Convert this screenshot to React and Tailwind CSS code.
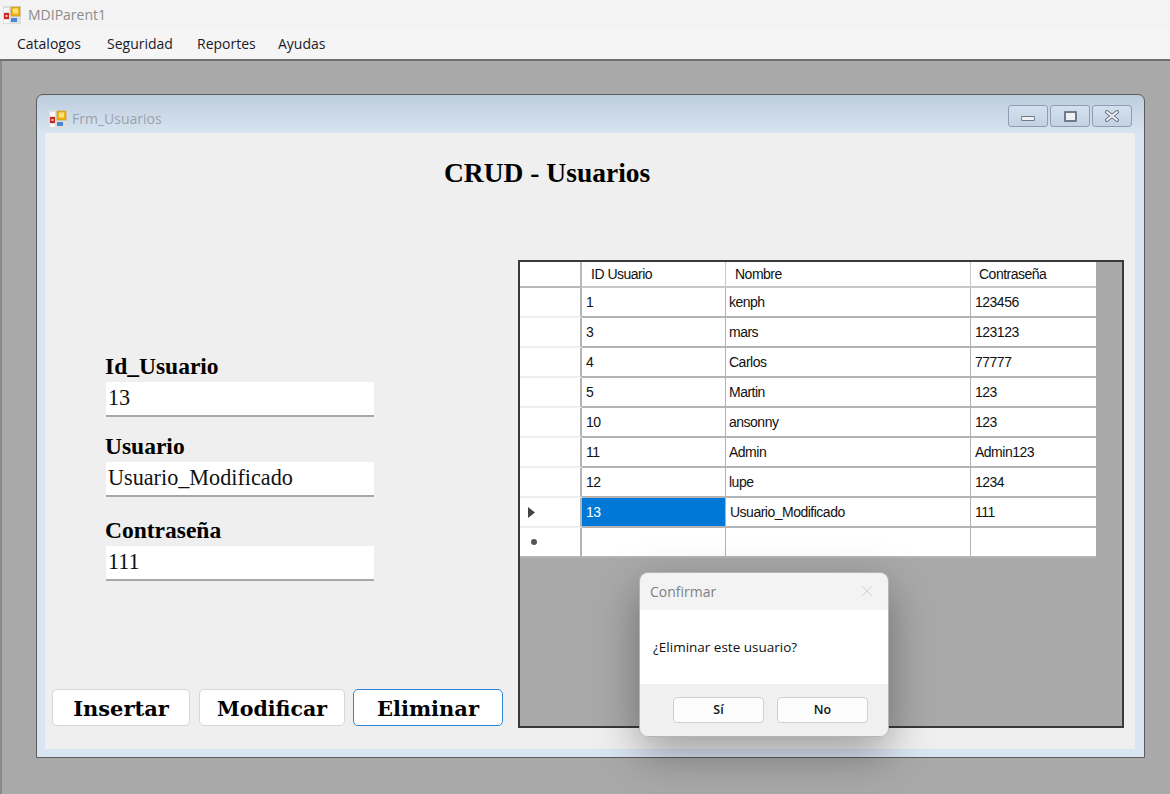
import { X } from 'lucide-react'

const rows = [
  ['1', 'kenph', '123456'],
  ['3', 'mars', '123123'],
  ['4', 'Carlos', '77777'],
  ['5', 'Martin', '123'],
  ['10', 'ansonny', '123'],
  ['11', 'Admin', 'Admin123'],
  ['12', 'lupe', '1234'],
  ['13', 'Usuario_Modificado', '111'],
]

function AppIcon() {
  return (
    <svg width="18" height="18" viewBox="0 0 18 18" className="shrink-0">
      <rect x="0" y="0" width="18" height="18" fill="#dedede" />
      <rect x="1" y="2" width="5" height="4" fill="#f8f8f8" />
      <rect x="1" y="7" width="5" height="6" fill="#c8261f" />
      <rect x="2.5" y="9" width="2" height="2" fill="#f6c9c0" />
      <rect x="1" y="14" width="5" height="3" fill="#f8f8f8" />
      <rect x="8" y="1" width="9" height="9" fill="#f2b415" stroke="#b98a1b" strokeWidth="0.6" />
      <rect x="10" y="2.5" width="5" height="5" fill="#fde37a" />
      <rect x="8" y="12" width="6" height="4" fill="#4a86d8" />
    </svg>
  )
}

function WinButton({ children }) {
  return (
    <div className="w-[40px] h-[22px] rounded-[3px] border border-[#8e9db5] bg-gradient-to-b from-[#d3e0ee] to-[#c3d2e3] flex items-center justify-center">
      {children}
    </div>
  )
}

function Field({ label, value, labelClass }) {
  return (
    <div className={labelClass}>
      <div className="ml-[60px] text-[23.5px] leading-[26px] font-bold text-black">{label}</div>
      <div className="ml-[61px] mt-[3px] w-[268px] h-[35px] bg-white border-b-2 border-[#a8a8a8] pl-[2px] text-[22.2px] leading-[32px] text-[#111]">
        {value}
      </div>
    </div>
  )
}

function FormButton({ children, className, active }) {
  return (
    <button
      className={`h-[37px] pt-[3px] rounded-[5px] bg-white font-bold text-black border ${active ? 'border-[#2f86d8]' : 'border-[#d6d6d6]'} ${className}`}
    >
      {children}
    </button>
  )
}

function Cell({ children, className = 'bg-white text-[#111]' }) {
  return (
    <div className={`h-[30px] border-r border-b-2 border-[#b4b4b4] flex items-center text-[14px] tracking-[-0.5px] ${className}`}>
      {children}
    </div>
  )
}

function Grid() {
  return (
    <div className="w-[606px] h-[468px] border-2 border-[#3a3a3a] bg-[#a9a9a9]">
      <div className="grid grid-cols-[62px_144px_245px_125px] w-[576px]" style={{ fontFamily: '"Liberation Sans", sans-serif' }}>
        <div className="h-[26px] bg-white border-r-2 border-b-2 border-[#b8b8b8]" />
        <div className="h-[26px] pt-[1px] bg-white border-r border-b-2 border-[#c8c8c8] pl-[9px] flex items-center text-[14px] tracking-[-0.5px] text-[#111]">ID Usuario</div>
        <div className="h-[26px] pt-[1px] bg-white border-r border-b-2 border-[#c8c8c8] pl-[9px] flex items-center text-[14px] tracking-[-0.5px] text-[#111]">Nombre</div>
        <div className="h-[26px] pt-[1px] bg-white border-b-2 border-[#c8c8c8] pl-[8px] flex items-center text-[14px] tracking-[-0.5px] text-[#111]">Contraseña</div>
        {rows.map((r) => {
          const selected = r[0] === '13'
          return (
            <div key={r[0]} className="contents">
              <div className="h-[30px] bg-white border-r-2 border-b-2 border-r-[#b4b4b4] border-b-[#efefef] flex items-center pl-[8px]">
                {selected && (
                  <svg width="7" height="11" viewBox="0 0 7 11">
                    <path d="M0 0 L7 5.5 L0 11 Z" fill="#444" />
                  </svg>
                )}
              </div>
              <Cell className={selected ? 'pl-[4px] bg-[#0078d7] text-white' : 'pl-[4px] bg-white text-[#111]'}>{r[0]}</Cell>
              <Cell className={selected ? 'pl-[4px] bg-white text-[#111]' : 'pl-[3px] bg-white text-[#111]'}>{r[1]}</Cell>
              <Cell className="pl-[4px] border-r-0 bg-white text-[#111]">{r[2]}</Cell>
            </div>
          )
        })}
        <div className="h-[30px] bg-white border-r-2 border-b-2 border-r-[#b4b4b4] border-b-[#b4b4b4] flex items-center pl-[11px]">
          <span className="w-[6px] h-[6px] rounded-full bg-[#555]" />
        </div>
        <Cell />
        <Cell />
        <Cell className="border-r-0 bg-white" />
      </div>
    </div>
  )
}

export default function App() {
  return (
    <div className="relative w-[1170px] h-[794px] overflow-hidden flex flex-col bg-[#a9a9a9]">
      {/* parent title bar */}
      <div className="h-[29px] bg-[#f3f3f3] flex items-center pl-[3px] gap-[7px] shrink-0">
        <AppIcon />
        <span className="text-[14px] text-[#8c8c8c]" style={{ fontFamily: '"Open Sans", sans-serif' }}>MDIParent1</span>
      </div>
      {/* menu */}
      <div className="h-[32px] pb-[2px] bg-[#f5f5f5] border-b-2 border-[#6f6f6f] flex items-center pl-[17px] text-[14px] text-[#1a1a2a] shrink-0" style={{ fontFamily: '"Open Sans", sans-serif' }}>
        <span className="w-[90px]">Catalogos</span>
        <span className="w-[90px]">Seguridad</span>
        <span className="w-[81px]">Reportes</span>
        <span>Ayudas</span>
      </div>
      {/* mdi area */}
      <div className="flex-1 border-l-2 border-[#8a8a8a] pt-[33px] pl-[34px]">
        <div className="w-[1109px] h-[664px] rounded-t-[7px] border border-[#5c5c5c] bg-gradient-to-b from-[#bdcddd] to-[#d9e5f2] to-[6%] flex flex-col pl-[8px] pr-[9px] pb-[8px]">
          <div className="h-[38px] flex items-center shrink-0 pl-[4px] gap-[5px] pt-[9px]">
            <AppIcon />
            <span className="text-[14px] text-[#9aa3ad]" style={{ fontFamily: '"Open Sans", sans-serif' }}>Frm_Usuarios</span>
            <div className="ml-auto flex gap-[2px] mr-[3px] -mt-[5px]">
              <WinButton>
                <span className="w-[14px] h-[5px] mt-[5px] bg-[#eef0f3] border border-[#6d7a8c] rounded-[1px]" />
              </WinButton>
              <WinButton>
                <span className="w-[13px] h-[11px] bg-[#eef0f3] border-2 border-[#6d7a8c] rounded-[1px]" />
              </WinButton>
              <WinButton>
                <svg width="16" height="12" viewBox="0 0 16 12">
                  <path d="M3 2 L13 10 M13 2 L3 10" stroke="#6d7a8c" strokeWidth="4" strokeLinecap="round" />
                  <path d="M3 2 L13 10 M13 2 L3 10" stroke="#eef0f3" strokeWidth="2" strokeLinecap="round" />
                </svg>
              </WinButton>
            </div>
          </div>
          <div className="flex-1 bg-[#efefef] flex flex-col" style={{ fontFamily: '"Liberation Serif", serif' }}>
            <h1 className="ml-[399px] mt-[23px] h-[104px] text-[27.5px] leading-[34px] font-bold text-black">CRUD - Usuarios</h1>
            <div className="flex">
              <div className="w-[473px] flex flex-col">
                <Field label="Id_Usuario" value="13" labelClass="mt-[93px]" />
                <Field label="Usuario" value="Usuario_Modificado" labelClass="mt-[16px]" />
                <Field label="Contraseña" value="111" labelClass="mt-[20px]" />
                <div className="flex mt-[108px] ml-[7px]" style={{ fontFamily: '"DejaVu Serif", serif' }}>
                  <FormButton className="w-[138px] text-[21px]">Insertar</FormButton>
                  <FormButton className="w-[146px] ml-[9px] text-[20.5px]">Modificar</FormButton>
                  <FormButton className="w-[150px] ml-[8px] text-[21px]" active>Eliminar</FormButton>
                </div>
              </div>
              <Grid />
            </div>
          </div>
        </div>
      </div>
      {/* confirm dialog */}
      <div className="absolute left-[639px] top-[572px] w-[250px] h-[165px] rounded-[9px] overflow-hidden border border-[#b5b5b5] shadow-[0_16px_45px_rgba(0,0,0,0.35)] flex flex-col" style={{ fontFamily: '"Open Sans", sans-serif' }}>
        <div className="h-[37px] pb-[1px] bg-[#f3f3f3] flex items-center justify-between pl-[10px] pr-[12px]">
          <span className="text-[14px] text-[#808080]">Confirmar</span>
          <X size={18} strokeWidth={1} className="text-[#c4c4c4]" />
        </div>
        <div className="h-[74px] bg-white flex items-center pl-[13px] pt-[1px] text-[13.5px] text-[#111]">¿Eliminar este usuario?</div>
        <div className="flex-1 bg-[#f0f0f0] flex items-center justify-end gap-[13px] pr-[20px] pb-[1px]">
          <button className="w-[91px] h-[26px] pt-[1px] bg-[#fdfdfd] border border-[#d0d0d0] rounded-[4px] text-[12.5px] font-semibold text-[#111]">Sí</button>
          <button className="w-[91px] h-[26px] pt-[1px] bg-[#fdfdfd] border border-[#d0d0d0] rounded-[4px] text-[12.5px] font-semibold text-[#111]">No</button>
        </div>
      </div>
    </div>
  )
}
